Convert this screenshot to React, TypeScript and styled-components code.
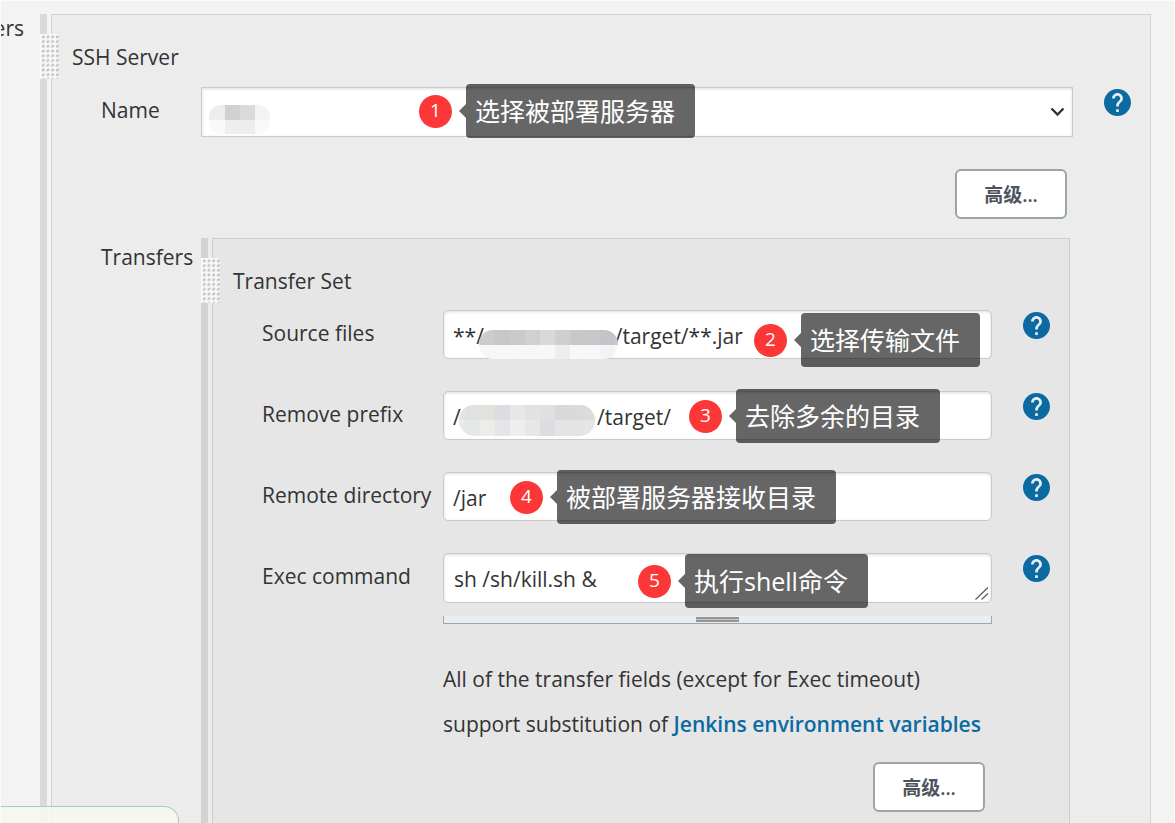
import React from "react";
import styled, { createGlobalStyle } from "styled-components";

const GlobalStyle = createGlobalStyle`
  *, *::before, *::after { box-sizing: border-box; }
  body {
    margin: 0;
    background: #f3f3f3;
    color: #333;
    font-family: "Open Sans", "Noto Sans CJK SC", sans-serif;
    font-size: 21px;
    line-height: 30px;
  }
`;

const Page = styled.main`
  display: flex;
  min-height: 100vh;
  padding: 13px 23px 0 0;
  border: 1px solid #fbfbfb;
  overflow: hidden;
`;

const Gutter = styled.div`
  display: flex;
  justify-content: flex-end;
  flex: none;
  width: 39px;
  padding-right: 16px;
  line-height: 28px;
  white-space: nowrap;
`;

const Chunk = styled.section<{ $deep?: boolean }>`
  position: relative;
  display: flex;
  flex: 1;
  min-width: 0;
  padding-left: 4px;
  border-left: 7px solid ${(p) => (p.$deep ? "#d3d3d3" : "#dadada")};
`;

const ChunkBody = styled.div<{ $deep?: boolean }>`
  display: flex;
  flex-direction: column;
  flex: 1;
  min-width: 0;
  padding: 27px 19px 0 20px;
  border: 1px solid ${(p) => (p.$deep ? "#cdcdcd" : "#d3d3d3")};
  border-bottom: 0;
  background: ${(p) => (p.$deep ? "#e6e6e6" : "#ececec")};
`;

const DragHandle = styled.svg`
  position: absolute;
  top: 20px;
  left: -7px;
  width: 19px;
  height: 45px;
`;

const Heading = styled.h2<{ $deep?: boolean }>`
  margin: 0;
  padding-bottom: ${(p) => (p.$deep ? "14px" : "15px")};
  font-size: 21px;
  font-weight: 400;
  line-height: 30px;
`;

const FormRow = styled.div`
  display: flex;
  align-items: flex-start;
  padding-left: 29px;
`;

const Label = styled.label<{ $wide?: boolean }>`
  flex: none;
  width: ${(p) => (p.$wide ? "181px" : "100px")};
  padding-top: 8px;
  white-space: nowrap;
`;

const Field = styled.div`
  position: relative;
  flex: 1;
  min-width: 0;
`;

const SetRow = styled(FormRow)`
  margin-bottom: 32px;
`;

const control = `
  display: block;
  width: 100%;
  margin: 0;
  padding: 2px 9px 0;
  border: 1px solid #cacaca;
  border-radius: 5px;
  outline: none;
  background: #fff;
  box-shadow: inset 0 1px 3px rgba(0, 0, 0, 0.14);
  color: #333;
  font-family: inherit;
  font-size: 21px;
  line-height: 30px;
`;

const TextInput = styled.input`
  ${control}
  height: 49px;
`;

const TextArea = styled.textarea`
  ${control}
  height: 50px;
  padding: 10px 10px 0;
  overflow: hidden;
  resize: none;
`;

const Corner = styled.svg`
  position: absolute;
  top: 34px;
  right: 3px;
  width: 14px;
  height: 13px;
  pointer-events: none;
`;

const Select = styled.select`
  ${control}
  height: 50px;
  border-radius: 0;
  appearance: none;
`;

const Chevron = styled.svg`
  position: absolute;
  top: 20px;
  right: 8px;
  width: 15px;
  height: 10px;
  pointer-events: none;
`;

const HelpButton = styled.button`
  display: flex;
  flex: none;
  width: 27px;
  height: 27px;
  margin: 2px 0 0 31px;
  padding: 0;
  border: 0;
  background: none;
  svg { width: 27px; height: 27px; }
`;

const Actions = styled.div<{ $inner?: boolean }>`
  display: flex;
  justify-content: flex-end;
  padding: ${(p) => (p.$inner ? "15px 65px 12px 0" : "32px 64px 19px 0")};
`;

const AdvancedButton = styled.button`
  width: 112px;
  height: 50px;
  padding: 0;
  border: 2px solid #98a5ae;
  border-radius: 6px;
  background: #fff;
  color: #4d545d;
  font-family: "Open Sans", "Noto Sans CJK SC", sans-serif;
  font-size: 19px;
  font-weight: 600;
`;

const TransfersRow = styled(FormRow)`
  flex: 1;
  align-items: stretch;
  margin-right: 61px;
`;

const TransfersLabel = styled.div`
  flex: none;
  width: 100px;
  padding-top: 4px;
`;

const Mosaic = styled.svg<{ $x: number; $y: number }>`
  position: absolute;
  left: ${(p) => p.$x}px;
  top: ${(p) => p.$y}px;
  pointer-events: none;
`;

const CalloutBox = styled.div<{ $x: number; $y: number }>`
  position: absolute;
  z-index: 1;
  left: ${(p) => p.$x}px;
  top: ${(p) => p.$y}px;
  display: flex;
  align-items: center;
  pointer-events: none;
  white-space: nowrap;
`;

const Badge = styled.span`
  width: 33px;
  height: 33px;
  border-radius: 50%;
  background: #fc3737;
  color: #fff;
  font-size: 19px;
  line-height: 31px;
  text-align: center;
`;

const Tip = styled.span`
  height: 54px;
  padding: 0 20px 0 9px;
  border-radius: 4px;
  background: rgba(0, 0, 0, 0.6);
  color: #fff;
  font-size: 25px;
  font-weight: 400;
  line-height: 55px;
`;

const Arrow = styled.span`
  margin-left: 7px;
  border: 7px solid transparent;
  border-left-width: 0;
  border-right-color: rgba(0, 0, 0, 0.6);
`;

const ResizeBar = styled.div`
  display: flex;
  justify-content: center;
  height: 8px;
  margin: 13px 0 33px;
  padding-top: 1px;
  border: 1px solid #9ca8b0;
  border-top: 0;
  background: #e8eef1;
`;

const Grip = styled.span`
  width: 43px;
  height: 5px;
  border: solid #959595;
  border-width: 2px 0;
  background: #c8c8c8;
`;

const HelpText = styled.p`
  max-width: 548px;
  margin: 0;
  line-height: 45px;
`;

const Link = styled.a`
  color: #0b6aa2;
  font-weight: 600;
  text-decoration: none;
`;

const StatusPanel = styled.aside`
  position: fixed;
  z-index: 2;
  bottom: 0;
  left: 1px;
  width: 178px;
  height: 17px;
  border: 1px solid #a6cfb9;
  border-width: 1px 1px 0 0;
  border-radius: 0 15px 0 0;
  background: rgba(246, 248, 238, 0.88);
`;

function Handle({ id }: { id: string }) {
  return (
    <DragHandle viewBox="0 0 57 135" aria-hidden="true">
      <defs>
        <pattern id={id} width="14.2" height="14.2" patternUnits="userSpaceOnUse">
          <path d="M5 8 L8 4 H14 V10 L11 13 H5 Z" fill="#c4c4c4" />
        </pattern>
      </defs>
      <rect width="57" height="135" fill="#fafafa" />
      <rect width="57" height="135" fill={`url(#${id})`} />
    </DragHandle>
  );
}

function Help({ topic }: { topic: string }) {
  return (
    <HelpButton type="button" aria-label={`Help: ${topic}`}>
      <svg viewBox="2 2 20 20" aria-hidden="true">
        <circle cx="12" cy="12" r="9" fill="#ececec" />
        <path
          fill="#0b6aa2"
          d="M12 2C6.48 2 2 6.48 2 12s4.48 10 10 10 10-4.48 10-10S17.52 2 12 2zm1 17h-2v-2h2v2zm2.07-7.75l-.9.92C13.45 12.9 13 13.5 13 15h-2v-.5c0-1.1.45-2.1 1.17-2.83l1.24-1.26c.37-.36.59-.86.59-1.41 0-1.1-.9-2-2-2s-2 .9-2 2H8c0-2.21 1.79-4 4-4s4 1.79 4 4c0 .88-.36 1.68-.93 2.25z"
        />
      </svg>
    </HelpButton>
  );
}

function Callout({ n, x, y, children }: { n: number; x: number; y: number; children: React.ReactNode }) {
  return (
    <CalloutBox $x={x} $y={y}>
      <Badge>{n}</Badge>
      <Arrow />
      <Tip>{children}</Tip>
    </CalloutBox>
  );
}

interface RedactionProps {
  id: string;
  x: number;
  y: number;
  width: number;
  height: number;
  radius: number;
  offset: number;
  rows: string[][];
}

/* Pixelated patch over a private part of a value */
function Redaction({ id, x, y, width, height, radius, offset, rows }: RedactionProps) {
  return (
    <Mosaic $x={x} $y={y} width={width} height={height} aria-hidden="true">
      <clipPath id={id}>
        <rect width={width} height={height} rx={radius} />
      </clipPath>
      <g clipPath={`url(#${id})`} shapeRendering="crispEdges">
        {rows.map((row, r) =>
          row.map((fill, c) => (
            <rect key={`${r}-${c}`} x={c * 15 - offset} y={r * 15} width="15" height="17" fill={fill} />
          )),
        )}
      </g>
    </Mosaic>
  );
}

const NAME_ROWS = [
  ["#eeeeed", "#eeeeed", "#d0d1d1", "#dadadb", "#f3f3f3"],
  ["#f9f9f9", "#f9f9f9", "#eeeeed", "#ededed", "#f9f9f9"],
];

const SOURCE_ROWS = [
  ["#d2d0d0", "#cdcbcb", "#c9c6c8", "#cbc9cb", "#d0d0d0", "#d8d9d9", "#cfcfcf", "#cbc6c8", "#c8c6c8", "#c4c4cb", "#c9c8ca"],
  ["#f9f9f9", "#f7f7f7", "#f7f7f7", "#f8f8f8", "#f7f7f7", "#f8f8f8", "#eeeeee", "#f8f8f8", "#f7f7f7", "#f3f3f4", "#f8f8f8"],
];

const PREFIX_ROWS = [
  ["#e4e4e5", "#dfe1e2", "#e1e1de", "#dcdde0", "#e7e7e7", "#e2e2e2", "#e0e0e0", "#d9d9d9", "#dadada", "#dddcdc"],
  ["#eaeaea", "#e6e7e8", "#ececea", "#e4e5e7", "#eeeeee", "#e7e7e7", "#dcdde0", "#e3e4e4", "#e4e4e4", "#e6e6e7"],
];

const blank = (count: number) => "\u00a0".repeat(count);

export default function App() {
  return (
    <>
      <GlobalStyle />
      <Page>
        <Gutter>ers</Gutter>
        <Chunk>
          <Handle id="dots-server" />
          <ChunkBody>
            <Heading>SSH Server</Heading>
            <FormRow>
              <Label htmlFor="server-name">Name</Label>
              <Field>
                <Select id="server-name" />
                <Redaction id="mask-name" x={8} y={18} width={61} height={29} radius={12} offset={14} rows={NAME_ROWS} />
                <Chevron viewBox="0 0 15 10" aria-hidden="true">
                  <path d="M1.5 1.5 L7.5 7.5 L13.5 1.5" fill="none" stroke="#333" strokeWidth="2.4" />
                </Chevron>
                <Callout n={1} x={218} y={-3}>选择被部署服务器</Callout>
              </Field>
              <Help topic="Name" />
            </FormRow>
            <Actions>
              <AdvancedButton type="button">高级...</AdvancedButton>
            </Actions>
            <TransfersRow>
              <TransfersLabel>Transfers</TransfersLabel>
              <Chunk $deep>
                <Handle id="dots-transfer" />
                <ChunkBody $deep>
                  <Heading $deep>Transfer Set</Heading>
                  <SetRow>
                    <Label $wide htmlFor="source-files">Source files</Label>
                    <Field>
                      <TextInput id="source-files" defaultValue={`**/${blank(24)}/target/**.jar`} />
                      <Redaction id="mask-source" x={36} y={20} width={139} height={29} radius={14} offset={14} rows={SOURCE_ROWS} />
                      <Callout n={2} x={311} y={3}>选择传输文件</Callout>
                    </Field>
                    <Help topic="Source files" />
                  </SetRow>
                  <SetRow>
                    <Label $wide htmlFor="remove-prefix">Remove prefix</Label>
                    <Field>
                      <TextInput id="remove-prefix" defaultValue={`/${blank(25)}/target/`} />
                      <Redaction id="mask-prefix" x={16} y={14} width={136} height={31} radius={15} offset={9} rows={PREFIX_ROWS} />
                      <Callout n={3} x={246} y={-2}>去除多余的目录</Callout>
                    </Field>
                    <Help topic="Remove prefix" />
                  </SetRow>
                  <SetRow>
                    <Label $wide htmlFor="remote-directory">Remote directory</Label>
                    <Field>
                      <TextInput id="remote-directory" defaultValue="/jar" />
                      <Callout n={4} x={67} y={-2}>被部署服务器接收目录</Callout>
                    </Field>
                    <Help topic="Remote directory" />
                  </SetRow>
                  <FormRow>
                    <Label $wide htmlFor="exec-command">Exec command</Label>
                    <Field>
                      <TextArea id="exec-command" defaultValue="sh /sh/kill.sh &amp;" />
                      <Corner viewBox="0 0 14 13" aria-hidden="true">
                        <path d="M0.5 12.5 L13 0.5 M6.5 12.5 L13 6.5" fill="none" stroke="#555" strokeWidth="1.1" />
                      </Corner>
                      <Callout n={5} x={195} y={1}>执行shell命令</Callout>
                      <ResizeBar>
                        <Grip />
                      </ResizeBar>
                      <HelpText>
                        All of the transfer fields (except for Exec timeout) support substitution of{" "}
                        <Link href="#environment">Jenkins environment variables</Link>
                      </HelpText>
                    </Field>
                    <Help topic="Exec command" />
                  </FormRow>
                  <Actions $inner>
                    <AdvancedButton type="button">高级...</AdvancedButton>
                  </Actions>
                </ChunkBody>
              </Chunk>
            </TransfersRow>
          </ChunkBody>
        </Chunk>
      </Page>
      <StatusPanel />
    </>
  );
}
